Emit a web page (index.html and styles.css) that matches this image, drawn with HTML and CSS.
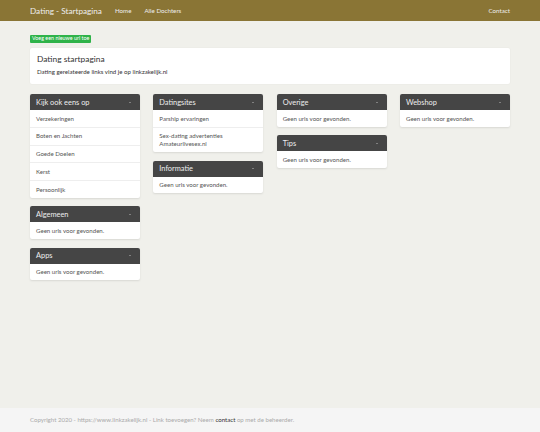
FILE: index.html
```html
<!DOCTYPE html>
<html lang="nl">
<head>
    <meta charset="UTF-8">
    <meta name="viewport" content="width=device-width, initial-scale=1.0">
    <title>Dating - Startpagina</title>
    <link rel="stylesheet" href="styles.css">
</head>
<body>

    <div class="navbar">
        <div class="nav-inner">
            <a class="brand" href="#">Dating - Startpagina</a>
            <a class="nav-link" href="#">Home</a>
            <a class="nav-link" href="#">Alle Dochters</a>
            <a class="nav-link nav-right" href="#">Contact</a>
        </div>
    </div>

    <div class="content">
        <a class="btn-add" href="#">Voeg een nieuwe url toe</a>

        <div class="intro">
            <h1>Dating startpagina</h1>
            <p>Dating gerelateerde links vind je op linkzakelijk.nl</p>
        </div>

        <div class="columns">
            <div class="column">
                <div class="panel">
                    <div class="panel-head">Kijk ook eens op <span class="caret"></span></div>
                    <ul class="panel-list">
                        <li>Verzekeringen</li>
                        <li>Boten en Jachten</li>
                        <li>Goede Doelen</li>
                        <li>Kerst</li>
                        <li>Persoonlijk</li>
                    </ul>
                </div>
                <div class="panel">
                    <div class="panel-head">Algemeen <span class="caret"></span></div>
                    <ul class="panel-list">
                        <li>Geen urls voor gevonden.</li>
                    </ul>
                </div>
                <div class="panel">
                    <div class="panel-head">Apps <span class="caret"></span></div>
                    <ul class="panel-list">
                        <li>Geen urls voor gevonden.</li>
                    </ul>
                </div>
            </div>

            <div class="column">
                <div class="panel">
                    <div class="panel-head">Datingsites <span class="caret"></span></div>
                    <ul class="panel-list">
                        <li>Parship ervaringen</li>
                        <li>Sex-dating advertenties<br>Amateurlivesex.nl</li>
                    </ul>
                </div>
                <div class="panel">
                    <div class="panel-head">Informatie <span class="caret"></span></div>
                    <ul class="panel-list">
                        <li>Geen urls voor gevonden.</li>
                    </ul>
                </div>
            </div>

            <div class="column">
                <div class="panel">
                    <div class="panel-head">Overige <span class="caret"></span></div>
                    <ul class="panel-list">
                        <li>Geen urls voor gevonden.</li>
                    </ul>
                </div>
                <div class="panel">
                    <div class="panel-head">Tips <span class="caret"></span></div>
                    <ul class="panel-list">
                        <li>Geen urls voor gevonden.</li>
                    </ul>
                </div>
            </div>

            <div class="column">
                <div class="panel">
                    <div class="panel-head">Webshop <span class="caret"></span></div>
                    <ul class="panel-list">
                        <li>Geen urls voor gevonden.</li>
                    </ul>
                </div>
            </div>
        </div>
    </div>

    <footer>
        Copyright 2020 - https://www.linkzakelijk.nl - Link toevoegen? Neem <a href="#">contact</a> op met de beheerder.
    </footer>

</body>
</html>
```

FILE: styles.css
```css
body {
    background-color: #f0f0eb;
    margin: 0;
    font-family: 'Lato', 'Liberation Sans', sans-serif;
    color: #555555;
    display: flex;
    flex-direction: column;
    min-height: 100vh;
}

a {
    text-decoration: none;
}

.navbar {
    background-color: #8a7535;
    height: 21px;
}

.nav-inner {
    width: 480px;
    margin: 0 auto;
    display: flex;
    align-items: center;
    height: 100%;
}

.brand {
    color: #eeeeee;
    font-size: 8.2px;
    margin-right: 13px;
}

.nav-link {
    color: #eeeeee;
    font-size: 6.2px;
    margin-right: 13px;
}

.nav-right {
    margin-left: auto;
    margin-right: 0;
}

.content {
    flex: 1;
    width: 480px;
    margin: 0 auto;
    padding-top: 14px;
}

.btn-add {
    display: block;
    width: max-content;
    background-color: #2fb34a;
    color: #ffffff;
    font-size: 5.4px;
    line-height: 7.5px;
    padding: 0 2px;
    border-radius: 1px;
}

.intro {
    background-color: #ffffff;
    margin-top: 5.5px;
    padding: 6px 7px 8px;
    border-radius: 2px;
    box-shadow: 0 0 2px rgba(0, 0, 0, 0.06);
}

.intro h1 {
    font-size: 8.4px;
    font-weight: normal;
    color: #333333;
    margin: 0 0 4px;
    line-height: 10px;
}

.intro p {
    font-size: 6.1px;
    color: #333333;
    margin: 0;
    line-height: 8px;
}

.columns {
    display: grid;
    grid-template-columns: repeat(4, 1fr);
    column-gap: 13.33px;
    margin-top: 10px;
    align-items: start;
}

.panel {
    background-color: #ffffff;
    border-radius: 2px;
    box-shadow: 0 1px 2px rgba(0, 0, 0, 0.1);
    margin-bottom: 8.5px;
    overflow: hidden;
}

.panel-head {
    background-color: #454545;
    color: #eeeeee;
    font-size: 7.4px;
    height: 16px;
    padding: 0 6px;
    display: flex;
    align-items: center;
    justify-content: space-between;
}

.caret {
    width: 0;
    height: 0;
    border-left: 1.2px solid transparent;
    border-right: 1.2px solid transparent;
    border-bottom: 1.6px solid #bbbbbb;
    margin-right: 3px;
}

.panel-list {
    list-style: none;
    margin: 0;
    padding: 0;
}

.panel-list li {
    font-size: 6.1px;
    line-height: 7.5px;
    padding: 4.7px 6px 4.6px;
    border-top: 1px solid #eeeeee;
}

.panel-list li:first-child {
    border-top: none;
}

footer {
    background-color: #f5f5f5;
    color: #aaaaaa;
    font-size: 6.1px;
    line-height: 8px;
    padding: 8px 30px 8px;
}

footer a {
    color: #333333;
}
```
